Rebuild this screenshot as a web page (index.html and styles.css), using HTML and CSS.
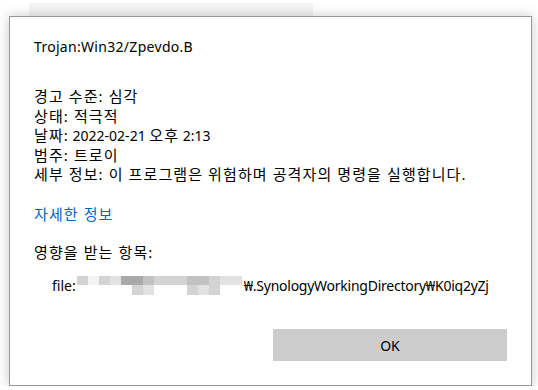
FILE: index.html
```html
<!DOCTYPE html>
<html lang="ko">
<head>
    <meta charset="UTF-8">
    <meta name="viewport" content="width=device-width, initial-scale=1.0">
    <title>Windows 보안</title>
    <link rel="stylesheet" href="styles.css">
</head>
<body>
    <div class="back-strip"></div>
    <div class="dialog">
        <div class="threat-name">Trojan:Win32/Zpevdo.B</div>
        <div class="details">
            <div class="ko">경고 수준: 심각</div>
            <div class="ko">상태: 적극적</div>
            <div><span class="ko">날짜:</span> 2022-02-21 <span class="ko">오후</span> 2:13</div>
            <div class="ko">범주: 트로이</div>
            <div class="ko">세부 정보: 이 프로그램은 위험하며 공격자의 명령을 실행합니다.</div>
        </div>
        <a class="more-link ko" href="#">자세한 정보</a>
        <div class="affected-title ko">영향을 받는 항목:</div>
        <div class="affected-item">
            <span>file:</span>
            <span class="blur">
                <i class="g3"></i><i class="g5"></i><i class="g3"></i><i class="g4"></i><i class="g1"></i><i class="g1"></i><i class="g2"></i><i class="g3"></i><i class="g3"></i><i class="g3"></i><i class="g2"></i><i class="g2"></i><i class="g3"></i><i class="g4"></i><i class="g4"></i>
                <i class="g0"></i><i class="g0"></i><i class="g0"></i><i class="g0"></i><i class="g0"></i><i class="g3"></i><i class="g4"></i><i class="g0"></i><i class="g0"></i><i class="g0"></i><i class="g3"></i><i class="g4"></i><i class="g3"></i><i class="g0"></i><i class="g0"></i>
            </span>
            <span class="path">₩.SynologyWorkingDirectory₩K0iq2yZj</span>
        </div>
        <div class="actions">
            <button class="ok-btn">OK</button>
        </div>
    </div>
</body>
</html>
```

FILE: styles.css
```css
body {
    margin: 0;
    background-color: #fff;
    font-family: "Noto Sans", "Noto Sans CJK KR", sans-serif;
    font-size: 14px;
    color: #000;
}
.ko {
    font-size: 15px;
    letter-spacing: 1.1px;
}
.back-strip {
    width: 284px;
    height: 13px;
    margin: 3px 0 0 29px;
    background-color: #f4f4f4;
}
.dialog {
    width: 497px;
    height: 368px;
    margin-left: 9px;
    padding: 0 0 0 24px;
    border: 1px solid #979797;
    background-color: #fff;
    box-shadow: 0 0 12px rgba(0, 0, 0, 0.22);
    display: flex;
    flex-direction: column;
    line-height: 19.4px;
}
.threat-name {
    margin-top: 20px;
    letter-spacing: 0.3px;
}
.details {
    margin-top: 31px;
}
.more-link {
    margin-top: 21px;
    color: #0067c0;
    text-decoration: none;
    align-self: flex-start;
}
.affected-title {
    margin-top: 18px;
}
.affected-item {
    margin-top: 14px;
    padding-left: 18px;
    display: flex;
    align-items: center;
}
.path {
    letter-spacing: -0.25px;
}
.blur {
    width: 165px;
    height: 19px;
    margin: 0 2px 0 1px;
    display: grid;
    grid-template-columns: repeat(15, 11px);
    grid-template-rows: 9px 10px;
}
.blur i { display: block; }
.g0 { background-color: #fff; }
.g1 { background-color: #a9a9a9; }
.g2 { background-color: #c2c2c2; }
.g3 { background-color: #d3d3d3; }
.g4 { background-color: #e2e2e2; }
.g5 { background-color: #f3f3f3; }
.actions {
    margin-top: auto;
    margin-bottom: 24px;
    display: flex;
    justify-content: flex-end;
    padding-right: 24px;
}
.ok-btn {
    width: 234px;
    height: 32px;
    border: none;
    background-color: #cccccc;
    font-family: inherit;
    font-size: 14px;
    color: #000;
}
```
